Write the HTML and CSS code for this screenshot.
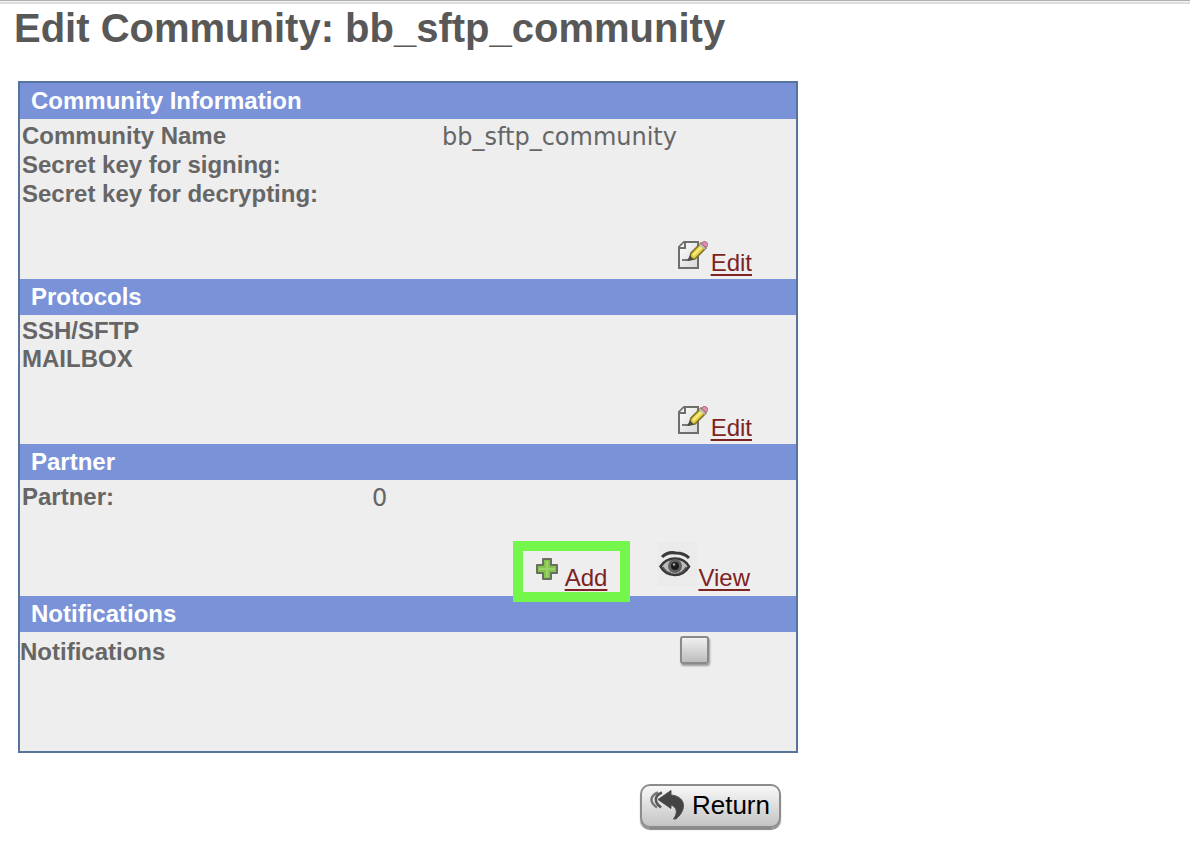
FILE: index.html
```html
<!DOCTYPE html>
<html lang="en">
<head>
<meta charset="utf-8">
<title>Edit Community: bb_sftp_community</title>
<link rel="stylesheet" href="styles.css">
</head>
<body>
<svg width="0" height="0" class="defs" aria-hidden="true">
  <defs>
    <linearGradient id="paper" x1="0" y1="0" x2="1" y2="1">
      <stop offset="0" stop-color="#ffffff"/><stop offset="1" stop-color="#d6d6d6"/>
    </linearGradient>
    <symbol id="icon-edit" viewBox="0 0 30 30">
      <path d="M6 1H20V27H1V6Z" fill="url(#paper)" stroke="#6e6e6a" stroke-width="2"/>
      <path d="M7 1V7H1" fill="#f4f4f4" stroke="#6e6e6a" stroke-width="2"/>
      <path d="M4 19H12" stroke="#777" stroke-width="2"/>
      <path d="M11 19L13 12L23 2L28 7L17 18Z" fill="#e3c93f" stroke="#77702c" stroke-width="1.500"/>
      <path d="M15 14.500L25 4.500" stroke="#f8ea78" stroke-width="2.500"/>
      <path d="M9 20L12 14.500L16 18.500Z" fill="#4a4a48"/>
      <path d="M21.500 3L27 8" stroke="#b8b8b8" stroke-width="2"/>
      <path d="M23.500 2Q26 -1 29 1.500Q31.500 4.500 28 6.500Z" fill="#e58bb4" stroke="#ad6b8a" stroke-width="1"/>
    </symbol>
  </defs>
</svg>
<div class="top-rule"></div>
<main class="page">
  <h1 class="title">Edit Community: bb_sftp_community</h1>
  <div class="panel">
    <section>
      <h2 class="heading">Community Information</h2>
      <div class="body body-info">
        <dl class="fields">
          <dt>Community Name</dt><dd>bb_sftp_community</dd>
          <dt>Secret key for signing:</dt><dd></dd>
          <dt>Secret key for decrypting:</dt><dd></dd>
        </dl>
        <div class="actions">
          <a class="action" href="#info"><svg class="icon-edit" aria-hidden="true"><use href="#icon-edit"/></svg><span>Edit</span></a>
        </div>
      </div>
    </section>
    <section>
      <h2 class="heading">Protocols</h2>
      <div class="body body-protocols">
        <ul class="protocols">
          <li>SSH/SFTP</li>
          <li>MAILBOX</li>
        </ul>
        <div class="actions">
          <a class="action" href="#protocols"><svg class="icon-edit" aria-hidden="true"><use href="#icon-edit"/></svg><span>Edit</span></a>
        </div>
      </div>
    </section>
    <section>
      <h2 class="heading">Partner</h2>
      <div class="body body-partner">
        <dl class="fields fields-partner">
          <dt>Partner:</dt><dd>0</dd>
        </dl>
        <div class="actions actions-partner">
          <a class="action highlight" href="#add">
            <svg class="icon-add" viewBox="0 0 22 28" aria-hidden="true">
              <path d="M7 1H15V7H21V15H15V21H7V15H1V7H7Z" fill="#86c250" stroke="#67705a" stroke-width="2" stroke-linejoin="round"/>
              <path d="M11 3V19M3 11H19" stroke="#9bd466" stroke-width="2"/>
            </svg><span>Add</span></a>
          <a class="action" href="#view">
            <svg class="icon-view" viewBox="0 0 40 44" aria-hidden="true">
              <path d="M5 15C9 11 14 10 19 11C25 11 29 13 32 16" fill="none" stroke="#3a3a3a" stroke-width="3"/>
              <path d="M3.500 24.500C7 19 12 16.500 18 16.500C24 16.500 29 19 32 24.500C28 31 23 33 18 33C12 33 7 31 3.500 24.500Z" fill="#bcbcbc" stroke="#383838" stroke-width="2.500"/>
              <circle cx="18" cy="24" r="7" fill="#606060"/>
              <circle cx="18" cy="24" r="4" fill="#1c1c1c"/>
              <circle cx="17" cy="22.500" r="1.300" fill="#aaa"/>
              <path d="M6 25C8 29 11 30.500 14 31M29 25C27 29 25 30.500 22 31" fill="none" stroke="#555" stroke-width="1.500"/>
            </svg><span>View</span></a>
        </div>
      </div>
    </section>
    <section>
      <h2 class="heading">Notifications</h2>
      <div class="body body-notify">
        <label class="notify" for="notify">Notifications</label>
        <input class="check" type="checkbox" id="notify">
      </div>
    </section>
  </div>
  <div class="footer">
    <button class="return" type="button">
      <svg class="icon-return" viewBox="0 0 36 30" aria-hidden="true">
        <path d="M8 2.500C0 6 -1 12 7 17.500" fill="none" stroke="#777" stroke-width="2.500"/>
        <path d="M12 2.500C4 6 4 12 11 17.500" fill="none" stroke="#555" stroke-width="2.500"/>
        <path d="M8 9.500L21 0.500V5C35 6 38 19 26 29H23.500C28 23 27 17 21 15V18.500Z" fill="#444" stroke="#505050" stroke-width="1" stroke-linejoin="round"/>
      </svg>
      <span>Return</span>
    </button>
  </div>
</main>
</body>
</html>
```
FILE: styles.css
```css
* { box-sizing: border-box; }
body {
  margin: 0;
  background: #fff;
  color: #666;
  font: 24px/28px "Liberation Sans", Arial, sans-serif;
}
.defs { position: absolute; }
.top-rule {
  height: 4px;
  border-top: 1px solid #aeacae;
  border-bottom: 2px solid #dedcde;
  background: #f4f4f4;
}
.page { max-width: 798px; }
.title {
  margin: 0 0 29px 14px;
  font-size: 40px;
  line-height: 48px;
  color: #585858;
}
.panel {
  margin-left: 18px;
  border: 2px solid #58749c;
  background: #eee;
}
.heading {
  margin: 0;
  padding: 4px 11px;
  background: #7a92d8;
  color: #fff;
  font-size: 24px;
  line-height: 28px;
}
.body { display: flex; flex-direction: column; padding: 2px; }
.fields {
  display: grid;
  grid-template-columns: 420px 1fr;
  margin: 0;
  line-height: 29px;
}
.fields-partner { grid-template-columns: 350px 1fr; }
.fields dt, .protocols { font-weight: bold; }
.fields dd {
  margin: 0;
  padding-top: 4px;
  font-family: "DejaVu Sans", Verdana, sans-serif;
  line-height: 25px;
}
.protocols { margin: 0; padding: 0; list-style: none; }
.actions {
  display: flex;
  justify-content: flex-end;
  align-items: baseline;
  padding-right: 42px;
}
.body-info, .body-protocols { gap: 33px; }
.body-partner { gap: 31px; padding-bottom: 4px; }
.actions-partner { gap: 37px; padding-right: 44px; }
.action {
  display: flex;
  align-items: baseline;
  gap: 3px;
  color: #7d2322;
  text-decoration: none;
}
.action span {
  text-decoration: underline;
  text-decoration-thickness: 2px;
  text-underline-offset: 3px;
}
.icon-edit { width: 30px; height: 30px; overflow: visible; }
.icon-add { width: 22px; height: 28px; }
.icon-view { width: 40px; height: 44px; background: #ebebeb; margin-right: -2px; }
.highlight {
  position: relative;
  z-index: 1;
  gap: 7px;
  padding: 7px 13px 0;
  outline: 10px solid #74f74a;
}
.body-notify {
  flex-direction: row;
  align-items: flex-start;
  justify-content: space-between;
  min-height: 119px;
  padding: 4px 87px 0 0;
}
.notify { padding-top: 2px; font-weight: bold; }
.check {
  appearance: none;
  width: 29px;
  height: 28px;
  margin: 0;
  border: 2px solid #8a8a8a;
  border-radius: 3px;
  background: linear-gradient(#f0f0f0, #bdbdbd);
  box-shadow: 1px 2px 2px #999;
}
.footer {
  display: flex;
  justify-content: flex-end;
  padding: 31px 17px 28px;
}
.return {
  display: flex;
  align-items: center;
  gap: 6px;
  height: 44px;
  padding: 0 9px 2px 8px;
  border: 2px solid #8c8c8c;
  border-radius: 10px;
  background: linear-gradient(#f8f8f8, #c4c4c4);
  box-shadow: 0 2px 1px #888;
  color: #000;
  font: 26px/30px "Liberation Sans", Arial, sans-serif;
}
.icon-return { width: 36px; height: 30px; }
```
